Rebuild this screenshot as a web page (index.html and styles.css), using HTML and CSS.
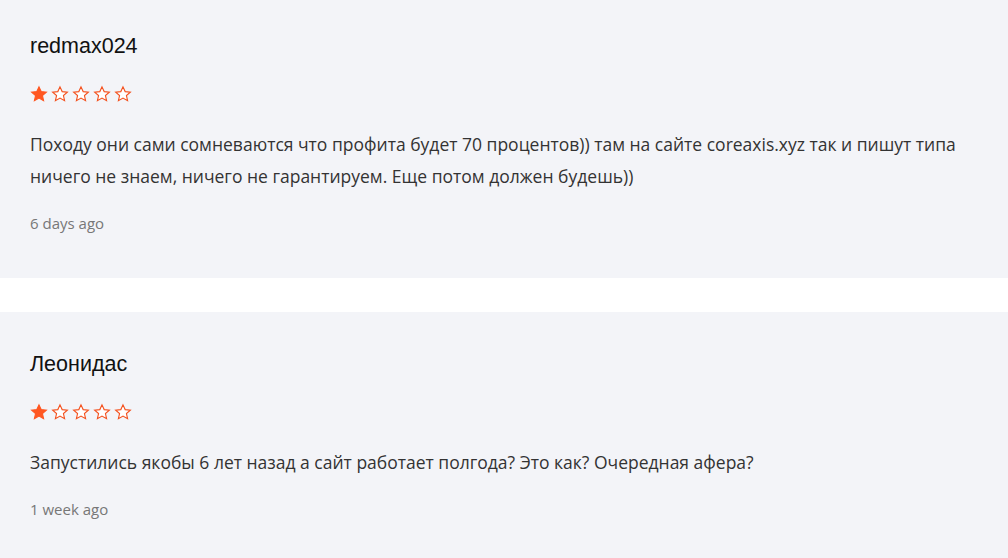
FILE: index.html
```html
<!DOCTYPE html>
<html lang="ru">
<head>
<meta charset="utf-8">
<link rel="stylesheet" href="styles.css">
</head>
<body>
<div class="reviews">
  <div class="review">
    <div class="name">redmax024</div>
    <div class="stars">
      <svg class="star full" viewBox="0 0 24 24"><path d="M12 2.5l2.9 6.3 6.9.7-5.2 4.6 1.5 6.8L12 17.4l-6.1 3.5 1.5-6.8-5.2-4.6 6.9-.7z"/></svg>
      <svg class="star" viewBox="0 0 24 24"><path d="M12 2.5l2.9 6.3 6.9.7-5.2 4.6 1.5 6.8L12 17.4l-6.1 3.5 1.5-6.8-5.2-4.6 6.9-.7z"/></svg>
      <svg class="star" viewBox="0 0 24 24"><path d="M12 2.5l2.9 6.3 6.9.7-5.2 4.6 1.5 6.8L12 17.4l-6.1 3.5 1.5-6.8-5.2-4.6 6.9-.7z"/></svg>
      <svg class="star" viewBox="0 0 24 24"><path d="M12 2.5l2.9 6.3 6.9.7-5.2 4.6 1.5 6.8L12 17.4l-6.1 3.5 1.5-6.8-5.2-4.6 6.9-.7z"/></svg>
      <svg class="star" viewBox="0 0 24 24"><path d="M12 2.5l2.9 6.3 6.9.7-5.2 4.6 1.5 6.8L12 17.4l-6.1 3.5 1.5-6.8-5.2-4.6 6.9-.7z"/></svg>
    </div>
    <p class="text">Походу они сами сомневаются что профита будет 70 процентов)) там на сайте coreaxis.xyz так и пишут типа ничего не знаем, ничего не гарантируем. Еще потом должен будешь))</p>
    <div class="date">6 days ago</div>
  </div>
  <div class="review">
    <div class="name">Леонидас</div>
    <div class="stars">
      <svg class="star full" viewBox="0 0 24 24"><path d="M12 2.5l2.9 6.3 6.9.7-5.2 4.6 1.5 6.8L12 17.4l-6.1 3.5 1.5-6.8-5.2-4.6 6.9-.7z"/></svg>
      <svg class="star" viewBox="0 0 24 24"><path d="M12 2.5l2.9 6.3 6.9.7-5.2 4.6 1.5 6.8L12 17.4l-6.1 3.5 1.5-6.8-5.2-4.6 6.9-.7z"/></svg>
      <svg class="star" viewBox="0 0 24 24"><path d="M12 2.5l2.9 6.3 6.9.7-5.2 4.6 1.5 6.8L12 17.4l-6.1 3.5 1.5-6.8-5.2-4.6 6.9-.7z"/></svg>
      <svg class="star" viewBox="0 0 24 24"><path d="M12 2.5l2.9 6.3 6.9.7-5.2 4.6 1.5 6.8L12 17.4l-6.1 3.5 1.5-6.8-5.2-4.6 6.9-.7z"/></svg>
      <svg class="star" viewBox="0 0 24 24"><path d="M12 2.5l2.9 6.3 6.9.7-5.2 4.6 1.5 6.8L12 17.4l-6.1 3.5 1.5-6.8-5.2-4.6 6.9-.7z"/></svg>
    </div>
    <p class="text">Запустились якобы 6 лет назад а сайт работает полгода? Это как? Очередная афера?</p>
    <div class="date">1 week ago</div>
  </div>
</div>
</body>
</html>
```
FILE: styles.css
```css
html, body {
  margin: 0;
  padding: 0;
  background: #ffffff;
}
body {
  overflow: hidden;
}
.reviews {
  display: flex;
  flex-direction: column;
  gap: 34px;
  margin-top: -6px;
}
.review {
  background: #f3f4f8;
  padding: 40px 30px 45px;
}
.name {
  font-family: "Liberation Sans", Arial, sans-serif;
  font-size: 21.5px;
  line-height: 24px;
  color: #111111;
}
.stars {
  display: flex;
  gap: 3px;
  margin-top: 27px;
  height: 18px;
}
.star {
  width: 18px;
  height: 18px;
  fill: #ffffff;
  stroke: #f4511e;
  stroke-width: 1.5;
  stroke-linejoin: miter;
}
.star.full {
  fill: #ff5722;
  stroke: #ff5722;
}
.text {
  font-family: "Open Sans", sans-serif;
  font-size: 17.5px;
  line-height: 32px;
  color: #333333;
  margin: 25px 0 0;
}
.date {
  font-family: "Open Sans", sans-serif;
  font-size: 15px;
  line-height: 20px;
  color: #777777;
  margin-top: 21px;
}
```
